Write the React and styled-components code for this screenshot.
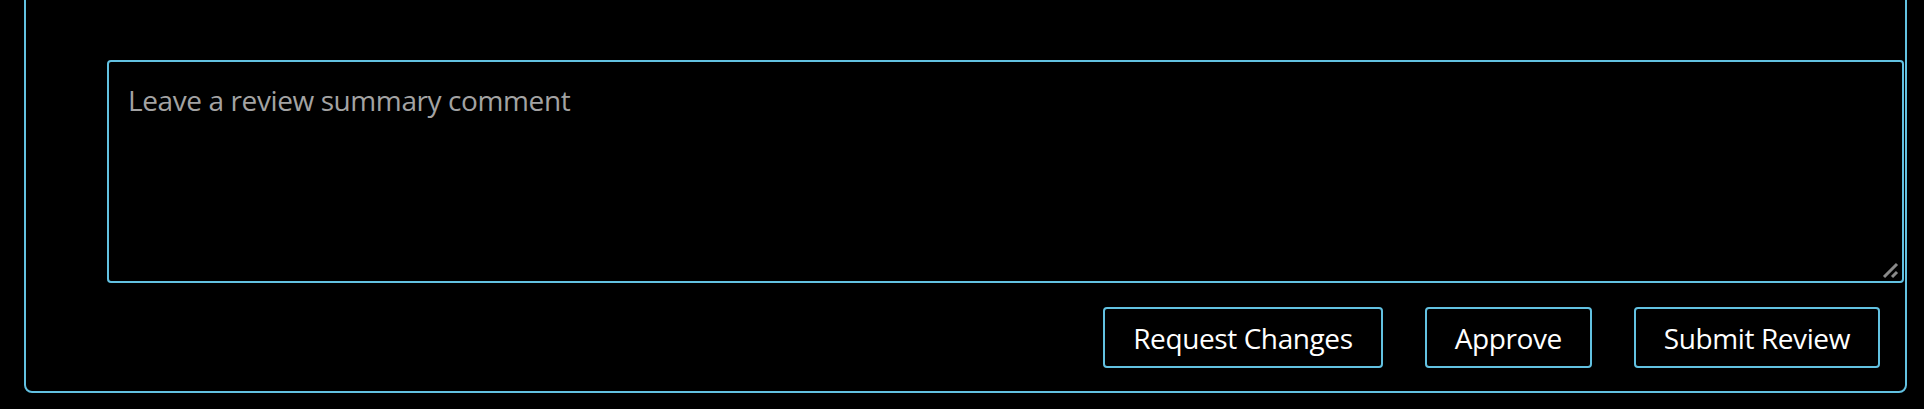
import React, { useState } from "react";
import styled, { createGlobalStyle } from "styled-components";

const accent = "#62c1e1";

const GlobalStyle = createGlobalStyle`
  html, body {
    margin: 0;
    padding: 0;
    background: #000;
    overflow: hidden;
  }
  body {
    font-family: "Open Sans", "Noto Sans", "Liberation Sans", sans-serif;
    color: #fff;
  }
`;

// Review box; its top edge sits above the visible area
const ReviewPanel = styled.section`
  margin: -20px 17px 15px 24px;
  padding: 78px 1px 23px 81px;
  border: 2px solid ${accent};
  border-radius: 8px;
  display: flex;
  flex-direction: column;
  gap: 24px;
`;

const InputWrap = styled.div`
  position: relative;
`;

const SummaryInput = styled.textarea`
  display: block;
  box-sizing: border-box;
  width: 100%;
  height: 223px;
  padding: 19px 19px;
  background: #000;
  color: #fff;
  border: 2px solid ${accent};
  border-radius: 4px;
  font-family: inherit;
  font-size: 28px;
  letter-spacing: -0.4px;
  outline: none;
  resize: none;

  &::placeholder {
    color: #a3a3a3;
  }
`;

// drawn resize grip in the corner
const Grip = styled.svg`
  position: absolute;
  right: 5px;
  bottom: 4px;
  width: 17px;
  height: 17px;
  pointer-events: none;
`;

const ActionRow = styled.div`
  display: flex;
  justify-content: flex-end;
  gap: 42px;
  padding-right: 24px;
`;

const ActionButton = styled.button`
  box-sizing: border-box;
  height: 61px;
  padding: 0 28px;
  background: #000;
  color: #fff;
  border: 2px solid ${accent};
  border-radius: 4px;
  font-family: inherit;
  font-size: 28px;
  letter-spacing: -0.4px;
  cursor: pointer;
`;

const App = () => {
  const [summary, setSummary] = useState("");

  return (
    <>
      <GlobalStyle />
      <ReviewPanel>
        <InputWrap>
          <SummaryInput
            placeholder="Leave a review summary comment"
            value={summary}
            onChange={(e) => setSummary(e.target.value)}
          />
          <Grip viewBox="0 0 17 17">
            <path d="M2 15 L15 2" stroke="#8a8a8a" strokeWidth="3" />
            <path d="M10 15 L15 10" stroke="#8a8a8a" strokeWidth="3" />
          </Grip>
        </InputWrap>
        <ActionRow>
          <ActionButton>Request Changes</ActionButton>
          <ActionButton>Approve</ActionButton>
          <ActionButton>Submit Review</ActionButton>
        </ActionRow>
      </ReviewPanel>
    </>
  );
};

export default App;
